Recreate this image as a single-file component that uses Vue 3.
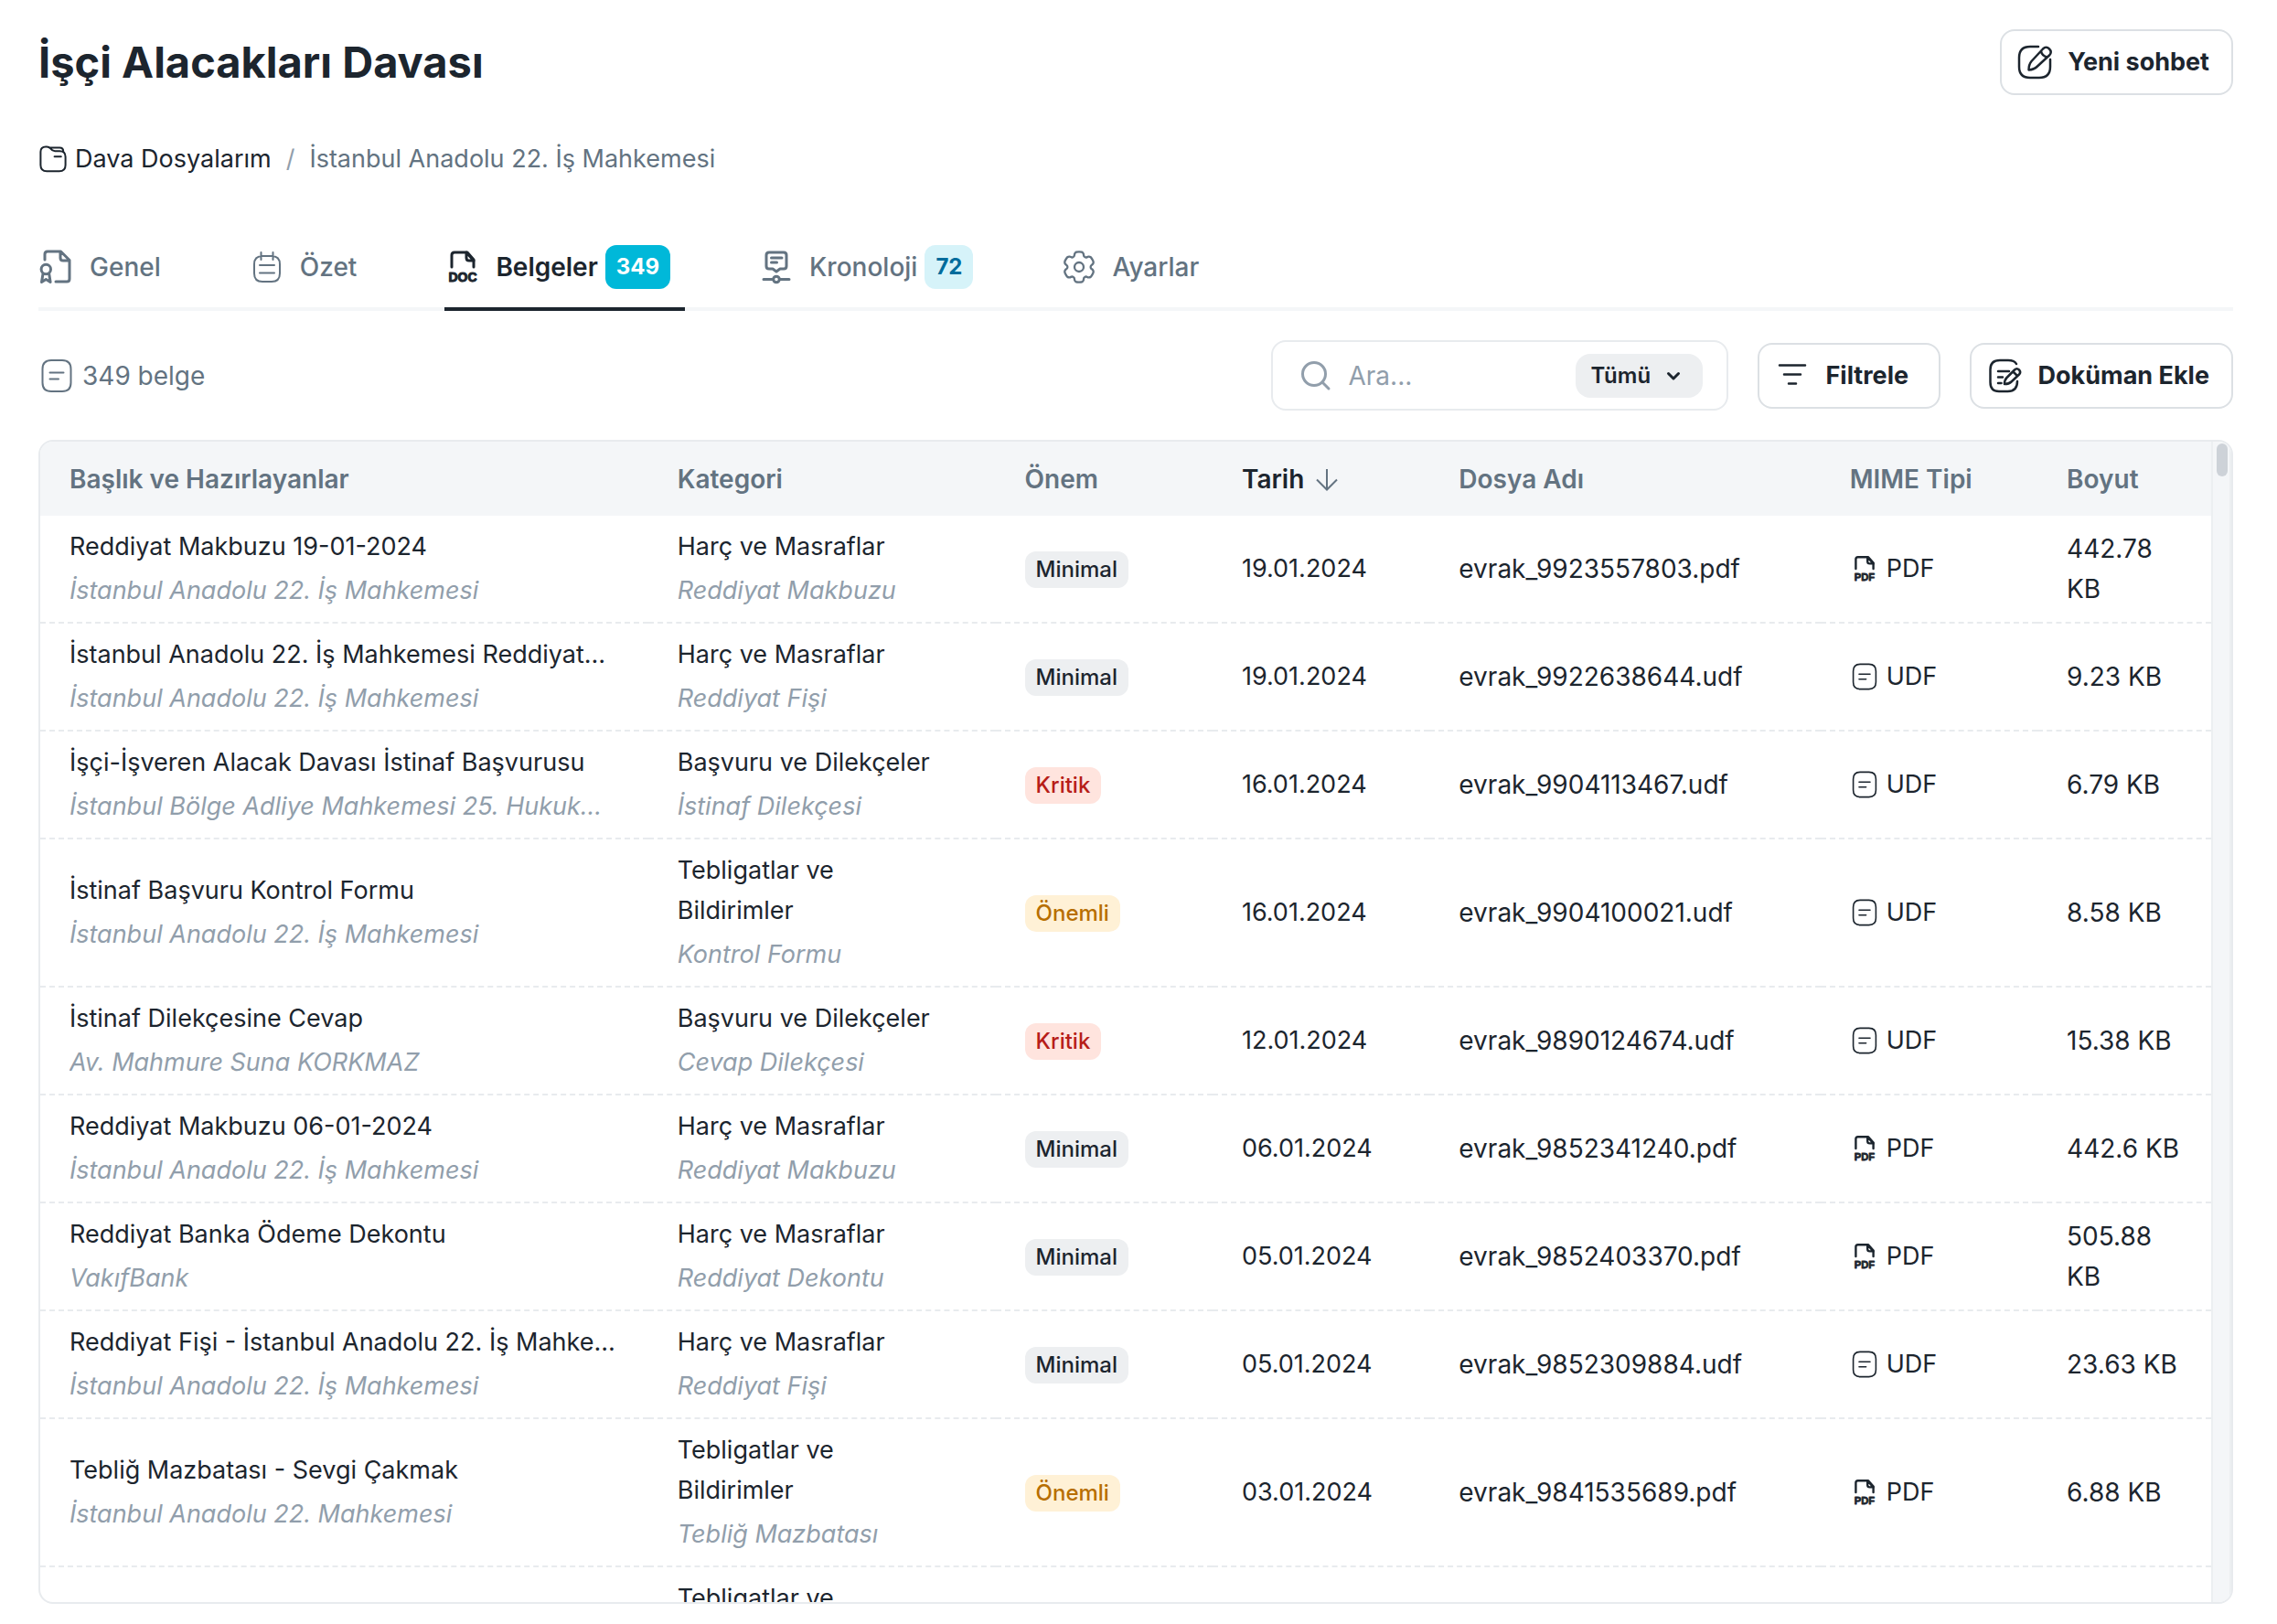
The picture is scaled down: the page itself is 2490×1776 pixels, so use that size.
<script setup>
import { h, ref } from 'vue'

const tabs = [
  { id: 'genel', label: 'Genel', icon: 'certificate' },
  { id: 'ozet', label: 'Özet', icon: 'notes' },
  { id: 'belgeler', label: 'Belgeler', icon: 'doc', count: 349 },
  { id: 'kronoloji', label: 'Kronoloji', icon: 'timeline', count: 72 },
  { id: 'ayarlar', label: 'Ayarlar', icon: 'gear' },
]
const activeTab = ref('belgeler')
const query = ref('')

const columns = [
  { label: 'Başlık ve Hazırlayanlar', width: '28%' },
  { label: 'Kategori', width: '16%' },
  { label: 'Önem', width: '10%' },
  { label: 'Tarih', width: '10%', sorted: true },
  { label: 'Dosya Adı', width: '18%' },
  { label: 'MIME Tipi', width: '10%' },
  { label: 'Boyut', width: '8%' },
]

const court = 'İstanbul Anadolu 22. İş Mahkemesi'
const levels = { Minimal: 'low', Kritik: 'critical', Önemli: 'important' }
const row = (title, author, category, kind, level, date, file, size) => ({
  title, author, category, kind, level, date, file, size,
  type: file.split('.').pop().toUpperCase(),
})
const rows = [
  row('Reddiyat Makbuzu 19-01-2024', court, 'Harç ve Masraflar', 'Reddiyat Makbuzu', 'Minimal', '19.01.2024', 'evrak_9923557803.pdf', '442.78 KB'),
  row('İstanbul Anadolu 22. İş Mahkemesi Reddiyat…', court, 'Harç ve Masraflar', 'Reddiyat Fişi', 'Minimal', '19.01.2024', 'evrak_9922638644.udf', '9.23 KB'),
  row('İşçi-İşveren Alacak Davası İstinaf Başvurusu', 'İstanbul Bölge Adliye Mahkemesi 25. Hukuk…', 'Başvuru ve Dilekçeler', 'İstinaf Dilekçesi', 'Kritik', '16.01.2024', 'evrak_9904113467.udf', '6.79 KB'),
  row('İstinaf Başvuru Kontrol Formu', court, 'Tebligatlar ve Bildirimler', 'Kontrol Formu', 'Önemli', '16.01.2024', 'evrak_9904100021.udf', '8.58 KB'),
  row('İstinaf Dilekçesine Cevap', 'Av. Mahmure Suna KORKMAZ', 'Başvuru ve Dilekçeler', 'Cevap Dilekçesi', 'Kritik', '12.01.2024', 'evrak_9890124674.udf', '15.38 KB'),
  row('Reddiyat Makbuzu 06-01-2024', court, 'Harç ve Masraflar', 'Reddiyat Makbuzu', 'Minimal', '06.01.2024', 'evrak_9852341240.pdf', '442.6 KB'),
  row('Reddiyat Banka Ödeme Dekontu', 'VakıfBank', 'Harç ve Masraflar', 'Reddiyat Dekontu', 'Minimal', '05.01.2024', 'evrak_9852403370.pdf', '505.88 KB'),
  row('Reddiyat Fişi - İstanbul Anadolu 22. İş Mahke…', court, 'Harç ve Masraflar', 'Reddiyat Fişi', 'Minimal', '05.01.2024', 'evrak_9852309884.udf', '23.63 KB'),
  row('Tebliğ Mazbatası - Sevgi Çakmak', 'İstanbul Anadolu 22. Mahkemesi', 'Tebligatlar ve Bildirimler', 'Tebliğ Mazbatası', 'Önemli', '03.01.2024', 'evrak_9841535689.pdf', '6.88 KB'),
]

const shapes = {
  certificate: {
    width: 3,
    d: 'M7 12V6q0-3 3-3h14.500L34 12.500V33q0 3-3 3H19M24 3v7q0 3 3 3h7M13.500 22.500a5.200 5.200 0 1 1-10.400 0a5.200 5.200 0 1 1 10.400 0M5 27.500L3.500 36.500l4.800-3l4.800 3L11.700 27.500',
  },
  notes: {
    width: 2,
    d: 'M15 8h10q9 0 9 9v10q0 9-9 9H15q-9 0-9-9V17q0-9 9-9M13.500 4v8M26.500 4v8M12 18h16M12 26.500h16',
  },
  timeline: {
    width: 3,
    d: 'M12 4h16q3 0 3 3v12q0 3-3 3h-4l-4 3-4-3h-4q-3 0-3-3V7q0-3 3-3M14.500 10h11.500M14.500 15h6M6 33.500h10.500M23.500 33.500H34M23.300 33.500a3.300 3.300 0 1 1-6.600 0a3.300 3.300 0 1 1 6.600 0',
  },
  sheet: {
    width: 2,
    d: 'M14 3h12q9.500 0 9.500 9.500v15q0 9.500-9.500 9.500H14q-9.500 0-9.500-9.500v-15Q4.500 3 14 3M12.500 16.500h15M12.500 23.500h9.500',
  },
  folder: {
    width: 2.500,
    d: 'M3 28V10q0-7 7-7h1.500q3 0 5 2.500q2.500 3.500 6 3.500H29q8 0 8 8v11q0 8.500-8.500 8.500h-17Q3 36.500 3 28zM15.500 4.500H29q5 0 5 5M22 16.500h9',
  },
  compose: {
    width: 2.500,
    d: 'M24 3H15Q3 3 3 15v10q0 12 12 12h10q12 0 12-12V17M13.500 28.500q0-6 3-9.500L29 5.500q3.500-3.500 7 0t0 7L23 24.500q-3.500 3.500-9.500 4zM27 8q1 5 6.500 6.500',
  },
  filter: { width: 2.500, d: 'M6 8.500h28M11 18.500h18M16 28.500h8' },
  edit: {
    width: 2.500,
    d: 'M33 7q-2-4-9-4h-9Q4.500 3 4.500 13v14q0 10 9.500 10h9.500q10.500 0 10.500-11M13 15h12M13 21.500h5M13 28h3.500M20 29q0-4.500 2.500-7L31 13.500q2.500-2.500 5 0t0 5L27.500 26.500q-2.500 2.500-7.500 2.500zM29.500 15.500l4.500 4.500',
  },
  search: { width: 3, d: 'M31.500 18a12.500 12.500 0 1 1-25 0a12.500 12.500 0 1 1 25 0M28.500 27.500L35 34' },
}

const gear = 'M13.765 2.152C13.398 2 12.932 2 12 2s-1.398 0-1.765.152a2 2 0 0 0-1.083 1.083c-.092.223-.129.484-.143.863a1.617 1.617 0 0 1-.79 1.353a1.617 1.617 0 0 1-1.567.008c-.336-.178-.579-.276-.82-.308a2 2 0 0 0-1.478.396C4.04 5.79 3.806 6.193 3.34 7s-.7 1.21-.751 1.605a2 2 0 0 0 .396 1.479c.148.192.355.353.676.555c.473.297.777.803.777 1.361s-.304 1.064-.777 1.36c-.321.203-.529.364-.676.556a2 2 0 0 0-.396 1.479c.052.394.285.798.75 1.605c.467.807.7 1.21 1.015 1.453a2 2 0 0 0 1.479.396c.24-.032.483-.13.819-.308a1.617 1.617 0 0 1 1.567.008c.483.28.77.795.79 1.353c.014.38.05.64.143.863a2 2 0 0 0 1.083 1.083C10.602 22 11.068 22 12 22s1.398 0 1.765-.152a2 2 0 0 0 1.083-1.083c.092-.223.129-.483.143-.863c.02-.558.307-1.074.79-1.353a1.617 1.617 0 0 1 1.567-.008c.336.178.579.276.819.308a2 2 0 0 0 1.479-.396c.315-.242.548-.646 1.014-1.453s.7-1.21.751-1.605a2 2 0 0 0-.396-1.479c-.148-.192-.355-.353-.676-.555A1.617 1.617 0 0 1 19.562 12c0-.558.304-1.064.777-1.36c.321-.203.529-.364.676-.556a2 2 0 0 0 .396-1.479c-.052-.394-.285-.798-.75-1.605c-.467-.807-.7-1.21-1.015-1.453a2 2 0 0 0-1.479-.396c-.24.032-.483.13-.82.308a1.617 1.617 0 0 1-1.566-.008a1.617 1.617 0 0 1-.79-1.353c-.014-.38-.05-.64-.143-.863a2 2 0 0 0-1.083-1.083Z'

const svgBase = { fill: 'none', stroke: 'currentColor', 'stroke-linecap': 'round', 'stroke-linejoin': 'round', 'aria-hidden': 'true' }

function Icon({ name }) {
  if (name === 'gear') {
    return h('svg', { ...svgBase, viewBox: '0 0 24 24', 'stroke-width': 1.4 }, [
      h('path', { d: gear }),
      h('circle', { cx: 12, cy: 12, r: 3 }),
    ])
  }
  if (name === 'doc' || name === 'pdf') {
    return h('svg', { ...svgBase, viewBox: '0 0 40 40', 'stroke-width': 3 }, [
      h('path', { d: 'M8 20V7q0-3 3-3h14l7 8v8' }),
      h('path', { d: 'M24 4v6q0 3 3 3h5z' }),
      h('text', {
        x: 20, y: 36, 'text-anchor': 'middle', 'font-size': 14, 'font-weight': 700,
        'font-family': '"Liberation Sans", sans-serif',
        fill: 'currentColor', 'stroke-width': 1,
      }, name.toUpperCase()),
    ])
  }
  const shape = shapes[name]
  return h('svg', { ...svgBase, viewBox: '0 0 40 40', 'stroke-width': shape.width }, [h('path', { d: shape.d })])
}
Icon.props = ['name']
</script>

<template>
  <main class="page">
    <header class="top">
      <h1>İşçi Alacakları Davası</h1>
      <button type="button" class="btn"><Icon name="compose" class="icon" />Yeni sohbet</button>
    </header>

    <nav class="crumbs" aria-label="Konum">
      <a href="#dosyalar"><Icon name="folder" class="icon small" />Dava Dosyalarım</a>
      <span class="sep">/</span>
      <span class="current">{{ court }}</span>
    </nav>

    <div class="tabs" role="tablist">
      <button
        v-for="tab in tabs"
        :key="tab.id"
        type="button"
        role="tab"
        class="tab"
        :class="{ active: tab.id === activeTab }"
        :aria-selected="tab.id === activeTab"
        @click="activeTab = tab.id"
      >
        <Icon :name="tab.icon" class="icon" />
        <span>{{ tab.label }}</span>
        <span v-if="tab.count" class="count">{{ tab.count }}</span>
      </button>
    </div>

    <div class="toolbar">
      <p class="total"><Icon name="sheet" class="icon" />349 belge</p>
      <div class="search">
        <Icon name="search" class="icon" />
        <input v-model="query" type="text" placeholder="Ara..." aria-label="Ara" />
        <div class="scope">
          <select aria-label="Arama alanı">
            <option>Tümü</option>
          </select>
          <svg class="chevron" viewBox="0 0 16 16" aria-hidden="true"><path d="M2.500 5.500L8 11l5.500-5.500" /></svg>
        </div>
      </div>
      <button type="button" class="btn"><Icon name="filter" class="icon" />Filtrele</button>
      <button type="button" class="btn"><Icon name="edit" class="icon" />Doküman Ekle</button>
    </div>

    <section class="card">
      <div class="scroller">
        <table>
          <colgroup>
            <col v-for="col in columns" :key="col.label" :style="{ width: col.width }" />
          </colgroup>
          <thead>
            <tr>
              <th v-for="col in columns" :key="col.label" scope="col" :class="{ sorted: col.sorted }">
                {{ col.label }}
                <svg v-if="col.sorted" class="arrow" viewBox="0 0 28 28" aria-hidden="true"><path d="M14 3v22M3 14.500l11 11 11-11" /></svg>
              </th>
            </tr>
          </thead>
          <tbody>
            <tr v-for="item in rows" :key="item.file">
              <td>
                <div class="title">{{ item.title }}</div>
                <div class="sub">{{ item.author }}</div>
              </td>
              <td>
                <div class="category">{{ item.category }}</div>
                <div class="sub">{{ item.kind }}</div>
              </td>
              <td><span class="badge" :class="levels[item.level]">{{ item.level }}</span></td>
              <td>{{ item.date }}</td>
              <td class="wide">{{ item.file }}</td>
              <td>
                <span class="mime"><Icon :name="item.type === 'PDF' ? 'pdf' : 'sheet'" class="icon small" />{{ item.type }}</span>
              </td>
              <td class="wide">{{ item.size }}</td>
            </tr>
            <tr>
              <td></td>
              <td><div class="category">Tebligatlar ve Bildirimler</div></td>
              <td colspan="5"></td>
            </tr>
          </tbody>
        </table>
      </div>
      <div class="track"><div class="thumb"></div></div>
    </section>
  </main>
</template>

<style>
body {
  margin: 0;
  background: #ffffff;
}
</style>

<style scoped>
.page {
  box-sizing: border-box;
  height: 100vh;
  display: flex;
  flex-direction: column;
  padding: 32px 48px 22px 42px;
  font-family: Inter, "Noto Sans", sans-serif;
  font-size: 27px;
  line-height: 44px;
  color: #1c252e;
}

button,
input,
select {
  font: inherit;
  color: inherit;
}

.icon {
  flex: none;
  width: 40px;
  height: 40px;
}

.icon.small {
  width: 32px;
  height: 32px;
}

.top {
  display: flex;
  align-items: center;
  justify-content: space-between;
}

h1 {
  margin: 0;
  font-size: 47px;
  line-height: 72px;
  font-weight: 700;
}

.btn {
  box-sizing: border-box;
  min-width: 200px;
  height: 72px;
  display: flex;
  align-items: center;
  gap: 16px;
  padding: 0 24px 0 16px;
  border: 2px solid #dce0e4;
  border-radius: 16px;
  background: #ffffff;
  font-weight: 700;
  white-space: nowrap;
}

.crumbs {
  display: flex;
  align-items: center;
  gap: 16px;
  margin-top: 48px;
}

.crumbs a {
  display: flex;
  align-items: center;
  gap: 8px;
  color: inherit;
  text-decoration: none;
}

.sep {
  color: #919eab;
}

.current {
  color: #637381;
}

.tabs {
  display: flex;
  gap: 80px;
  margin-top: 48px;
  box-shadow: inset 0 -4px #f4f6f8;
}

.tab {
  height: 96px;
  display: flex;
  align-items: center;
  padding: 0 16px 0 0;
  border: 0;
  background: none;
  color: #637381;
  font-size: 28px;
  font-weight: 500;
}

.tab .icon {
  margin-right: 16px;
}

.tab.active {
  color: #1c252e;
  font-weight: 600;
  box-shadow: inset 0 -4px #1c252e;
}

.count {
  height: 48px;
  margin-left: 8px;
  padding: 0 12px;
  border-radius: 12px;
  background: #d6f3f9;
  color: #006c9c;
  font-size: 24px;
  line-height: 48px;
  font-weight: 700;
}

.active .count {
  background: #00b8d9;
  color: #ffffff;
}

.toolbar {
  display: flex;
  align-items: center;
  gap: 32px;
  margin: 32px 0;
}

.total {
  display: flex;
  align-items: center;
  gap: 8px;
  margin: 0 auto 0 0;
  color: #637381;
  font-size: 28px;
}

.search {
  box-sizing: border-box;
  width: 500px;
  height: 77px;
  display: flex;
  align-items: center;
  padding: 0 26px;
  border: 2px solid #e8ebee;
  border-radius: 16px;
  color: #919eab;
}

.search input {
  flex: 1;
  min-width: 0;
  margin-left: 16px;
  padding: 0;
  border: 0;
  outline: 0;
  background: none;
  color: #1c252e;
  font-size: 28px;
}

.search input::placeholder {
  color: #919eab;
  opacity: 1;
}

.scope {
  position: relative;
  flex: none;
}

.scope select {
  display: block;
  width: 139px;
  height: 48px;
  padding: 0 16px;
  border: 0;
  border-radius: 16px;
  background: #edeff1;
  color: #1c252e;
  font-size: 24px;
  font-weight: 600;
  line-height: 48px;
  appearance: none;
}

.chevron {
  position: absolute;
  top: 16px;
  right: 24px;
  width: 16px;
  height: 16px;
  fill: none;
  stroke: #1c252e;
  stroke-width: 3;
  stroke-linecap: round;
  stroke-linejoin: round;
  pointer-events: none;
}

.card {
  flex: 1;
  min-height: 0;
  display: flex;
  overflow: hidden;
  border: 2px solid #e8ebee;
  border-radius: 16px;
}

.scroller {
  flex: 1;
  overflow: auto;
  scrollbar-width: none;
}

.track {
  flex: none;
  width: 12px;
  padding: 2px 2px 2px 4px;
  border: solid #eceff1;
  border-width: 0 2px;
  background: #f4f6f8;
}

.thumb {
  height: 36px;
  border-radius: 6px;
  background: #cdd2d8;
}

table {
  width: 100%;
  table-layout: fixed;
  border-collapse: separate;
  border-spacing: 0;
}

th {
  height: 81px;
  padding: 0 32px;
  background: #f4f6f8;
  color: #637381;
  font-size: 28px;
  font-weight: 600;
  text-align: left;
  white-space: nowrap;
}

th.sorted {
  color: #1c252e;
}

.arrow {
  width: 28px;
  height: 28px;
  margin-left: 4px;
  vertical-align: -4px;
  fill: none;
  stroke: #637381;
  stroke-width: 2;
}

td {
  padding: 12px 32px;
  border-bottom: 2px dashed #e8ebee;
  vertical-align: middle;
}

.wide {
  font-size: 28px;
}

.title,
.sub {
  overflow: hidden;
  white-space: nowrap;
}

.category {
  max-width: 300px;
}

.sub {
  margin-top: 4px;
  color: #919eab;
  font-style: italic;
}

.badge {
  display: inline-block;
  padding: 0 12px;
  border-radius: 12px;
  font-size: 24px;
  line-height: 40px;
  font-weight: 500;
}

.low {
  background: #edeff1;
}

.critical {
  background: #ffe4de;
  color: #b71d18;
}

.important {
  background: #fff1d6;
  color: #b76e00;
}

.mime {
  display: flex;
  align-items: center;
  gap: 8px;
}
</style>
